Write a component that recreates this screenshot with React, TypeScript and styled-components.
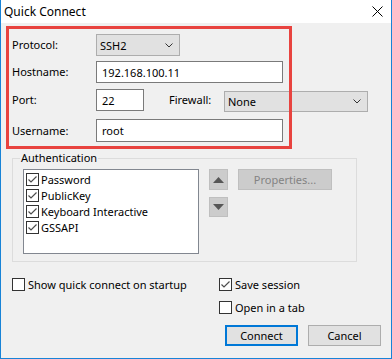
import React from "react";
import styled, { createGlobalStyle } from "styled-components";

const GlobalStyle = createGlobalStyle`
  body {
    margin: 0;
    font-family: "Noto Sans", "Open Sans", sans-serif;
    font-size: 11px;
    color: #000;
  }
`;

const Window = styled.div`
  position: relative;
  width: 392px;
  height: 359px;
  box-sizing: border-box;
  border: 1px solid #1883d7;
  border-top: none;
  background: #f0f0f0;
  display: flex;
  flex-direction: column;
`;

const TitleBar = styled.div`
  height: 23px;
  background: #fff;
  display: flex;
  align-items: center;
  justify-content: space-between;
  padding: 0 8px 0 3px;
  font-size: 12px;
`;

const Body = styled.div`
  padding: 11px 10px 11px 11px;
  display: flex;
  flex-direction: column;
`;

const FormRow = styled.div<{ $top: number }>`
  display: flex;
  align-items: flex-start;
  margin-top: ${(p) => p.$top}px;
`;

const Label = styled.span<{ $w: number; $h: number }>`
  width: ${(p) => p.$w}px;
  line-height: ${(p) => p.$h}px;
  flex-shrink: 0;
`;

const TextBox = styled.div<{ $w: number; $h: number }>`
  width: ${(p) => p.$w}px;
  height: ${(p) => p.$h}px;
  box-sizing: border-box;
  border: 1px solid #7a7a7a;
  background: #fff;
  padding-left: 5px;
  display: flex;
  align-items: center;
`;

const Combo = styled.div<{ $w: number; $h: number; $dy?: number }>`
  width: ${(p) => p.$w}px;
  height: ${(p) => p.$h}px;
  margin-top: ${(p) => p.$dy ?? 0}px;
  box-sizing: border-box;
  border: 1px solid #adadad;
  background: #e1e1e1;
  padding: 0 6px 0 3px;
  display: flex;
  align-items: center;
  justify-content: space-between;
`;

const Group = styled.fieldset`
  margin: 8px 0 0 0;
  padding: 0 0 7px 10px;
  width: 345px;
  box-sizing: border-box;
  min-width: 0;
  border: 1px solid #dcdcdc;
`;

const Legend = styled.legend`
  padding: 0 1px;
  margin-left: -3px;
  line-height: 16px;
`;

const AuthRow = styled.div`
  display: flex;
  align-items: flex-start;
  gap: 10px;
  margin-top: 3px;
`;

const ListBox = styled.div`
  width: 176px;
  height: 85px;
  box-sizing: border-box;
  border: 1px solid #828790;
  background: #fff;
  padding: 1px 0 0 2px;
  display: flex;
  flex-direction: column;
`;

const ListItem = styled.div`
  display: flex;
  align-items: center;
  gap: 2px;
  height: 16px;
`;

const ArrowColumn = styled.div`
  display: flex;
  flex-direction: column;
  gap: 7px;
`;

const ArrowButton = styled.div<{ $h: number }>`
  width: 19px;
  height: ${(p) => p.$h}px;
  box-sizing: border-box;
  border: 1px solid #bfbfbf;
  background: #cccccc;
  display: flex;
  align-items: center;
  justify-content: center;
`;

const DisabledButton = styled.div`
  width: 94px;
  height: 21px;
  box-sizing: border-box;
  border: 1px solid #bfbfbf;
  background: #cccccc;
  color: #838383;
  display: flex;
  align-items: center;
  justify-content: center;
`;

const Options = styled.div`
  display: grid;
  grid-template-columns: 207px 1fr;
  margin-top: 15px;
`;

const OptionColumn = styled.div`
  display: flex;
  flex-direction: column;
  gap: 8px;
`;

const CheckRow = styled.div`
  display: flex;
  align-items: center;
  gap: 3px;
  height: 15px;
`;

const ButtonRow = styled.div`
  display: flex;
  justify-content: flex-end;
  gap: 10px;
  margin-top: 10px;
`;

const PushButton = styled.div<{ $default?: boolean }>`
  width: 73px;
  height: 21px;
  box-sizing: border-box;
  border: ${(p) => (p.$default ? "2px solid #0078d7" : "1px solid #adadad")};
  background: #e1e1e1;
  display: flex;
  align-items: center;
  justify-content: center;
`;

const Highlight = styled.div`
  position: absolute;
  left: 5px;
  top: 26px;
  width: 286px;
  height: 123px;
  box-sizing: border-box;
  border: 3px solid #e8433f;
  pointer-events: none;
`;

const Check = ({ on }: { on: boolean }) => (
  <svg width="13" height="13" viewBox="0 0 13 13" style={{ flexShrink: 0 }}>
    <rect x="0.5" y="0.5" width="12" height="12" fill="#fff" stroke="#333" />
    {on && (
      <path d="M2.5 6.5 L5 9 L10.5 3.5" fill="none" stroke="#4d4d4d" strokeWidth="1.2" />
    )}
  </svg>
);

const Chevron = () => (
  <svg width="8" height="5" viewBox="0 0 8 5">
    <path d="M0.5 0.5 L4 4 L7.5 0.5" fill="none" stroke="#333" strokeWidth="1" />
  </svg>
);

const Triangle = ({ up }: { up: boolean }) => (
  <svg width="11" height="6" viewBox="0 0 11 6">
    <path d={up ? "M0 6 L5.5 0 L11 6 Z" : "M0 0 L5.5 6 L11 0 Z"} fill="#575757" />
  </svg>
);

const CloseIcon = () => (
  <svg width="11" height="11" viewBox="0 0 11 11">
    <path d="M0.5 0.5 L10.5 10.5 M10.5 0.5 L0.5 10.5" stroke="#000" strokeWidth="1" />
  </svg>
);

const methods = ["Password", "PublicKey", "Keyboard Interactive", "GSSAPI"];

export default function App() {
  return (
    <Window>
      <GlobalStyle />
      <TitleBar>
        <span>Quick Connect</span>
        <CloseIcon />
      </TitleBar>
      <Body>
        <FormRow $top={0}>
          <Label $w={84} $h={22}>Protocol:</Label>
          <Combo $w={84} $h={22}>
            SSH2
            <Chevron />
          </Combo>
        </FormRow>
        <FormRow $top={5}>
          <Label $w={84} $h={22}>Hostname:</Label>
          <TextBox $w={187} $h={22}>192.168.100.11</TextBox>
        </FormRow>
        <FormRow $top={6}>
          <Label $w={84} $h={22}>Port:</Label>
          <TextBox $w={48} $h={22}>22</TextBox>
          <Label $w={55} $h={22} style={{ marginLeft: 25 }}>Firewall:</Label>
          <Combo $w={144} $h={21} $dy={2}>
            None
            <Chevron />
          </Combo>
        </FormRow>
        <FormRow $top={7}>
          <Label $w={84} $h={23}>Username:</Label>
          <TextBox $w={187} $h={23}>root</TextBox>
        </FormRow>

        <Group>
          <Legend>Authentication</Legend>
          <AuthRow>
            <ListBox>
              {methods.map((m) => (
                <ListItem key={m}>
                  <Check on />
                  {m}
                </ListItem>
              ))}
            </ListBox>
            <ArrowColumn>
              <ArrowButton $h={21}>
                <Triangle up />
              </ArrowButton>
              <ArrowButton $h={20}>
                <Triangle up={false} />
              </ArrowButton>
            </ArrowColumn>
            <DisabledButton>Properties...</DisabledButton>
          </AuthRow>
        </Group>

        <Options>
          <OptionColumn>
            <CheckRow>
              <Check on={false} />
              Show quick connect on startup
            </CheckRow>
          </OptionColumn>
          <OptionColumn>
            <CheckRow>
              <Check on />
              Save session
            </CheckRow>
            <CheckRow>
              <Check on={false} />
              Open in a tab
            </CheckRow>
          </OptionColumn>
        </Options>

        <ButtonRow>
          <PushButton $default>Connect</PushButton>
          <PushButton>Cancel</PushButton>
        </ButtonRow>
      </Body>
      <Highlight />
    </Window>
  );
}
